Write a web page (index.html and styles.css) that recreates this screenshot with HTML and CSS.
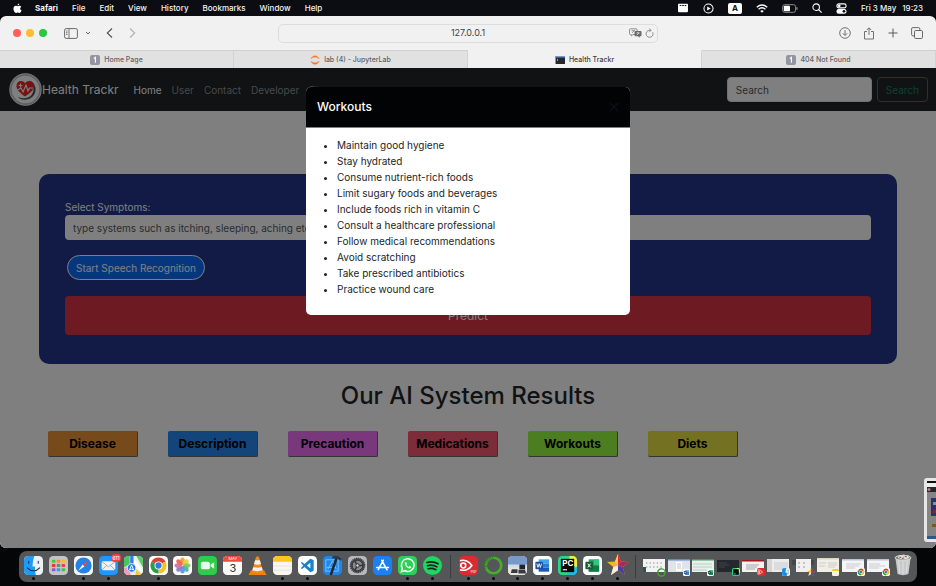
FILE: index.html
```html
<!DOCTYPE html>
<html lang="en">
<head>
<meta charset="utf-8">
<meta name="viewport" content="width=device-width, initial-scale=1">
<title>Health Trackr</title>
<link rel="stylesheet" href="styles.css">
</head>
<body>
<svg class="sprite" aria-hidden="true">
  <symbol id="finder" viewBox="0 0 20 20"><rect width="20" height="20" rx="4.5" fill="#eef1f5"/><path d="M4.5 0H11C9.500 4 9 7.500 9 11h2.500c0 3.500.3 6 1 9H4.500A4.500 4.500 0 0 1 0 15.500v-11A4.500 4.500 0 0 1 4.500 0z" fill="#1e9bf5"/><path d="M5 5.500v2.200M15 5.500v2.200M3.500 12.500c3.500 4 9.500 4 13 0" fill="none" stroke="#16324f" stroke-width="1.100" stroke-linecap="round"/></symbol>
  <symbol id="launchpad" viewBox="0 0 20 20"><rect width="20" height="20" rx="4.500" fill="#c3c4c8"/><g><rect x="3" y="4" width="3.800" height="3" rx=".8" fill="#4fc245"/><rect x="8.100" y="4" width="3.800" height="3" rx=".8" fill="#ff8a1f"/><rect x="13.200" y="4" width="3.800" height="3" rx=".8" fill="#ffb52b"/><rect x="3" y="8.500" width="3.800" height="3" rx=".8" fill="#e5383b"/><rect x="8.100" y="8.500" width="3.800" height="3" rx=".8" fill="#7c7e83"/><rect x="13.200" y="8.500" width="3.800" height="3" rx=".8" fill="#ed4141"/><rect x="3" y="13" width="3.800" height="3" rx=".8" fill="#9a4fd0"/><rect x="8.100" y="13" width="3.800" height="3" rx=".8" fill="#2f9df4"/><rect x="13.200" y="13" width="3.800" height="3" rx=".8" fill="#43c04a"/></g></symbol>
  <symbol id="safari" viewBox="0 0 20 20"><rect width="20" height="20" rx="4.500" fill="#f4f5f7"/><circle cx="10" cy="10" r="8.500" fill="#2482e6"/><path d="M15.500 4.500 11 11 9 9z" fill="#f3493d"/><path d="M4.500 15.500 9 9l2 2z" fill="#f5f5f5"/></symbol>
  <symbol id="mail" viewBox="0 0 20 20"><rect width="20" height="20" rx="4.500" fill="#2196f8"/><rect x="2.800" y="5.500" width="14.400" height="9.500" rx="1.500" fill="#eef2f5"/><path d="m3.200 6 6.800 5.300L16.800 6M3.200 14.600 8 10M16.800 14.600 12 10" fill="none" stroke="#8a9cad" stroke-width=".8"/></symbol>
  <symbol id="maps" viewBox="0 0 20 20"><rect width="20" height="20" rx="4.500" fill="#eceeec"/><path d="M0 4.500A4.500 4.500 0 0 1 4.500 0H6v9L0 12z" fill="#4cc35e"/><path d="M13 0h2.500A4.500 4.500 0 0 1 20 4.500V12z" fill="#5cca64"/><path d="M6.500 0H10v8H6.500z" fill="#2e7ff0"/><path d="M0 13l6-3 1 10H4.500A4.500 4.500 0 0 1 0 15.500z" fill="#ee9ebb"/><path d="M11 3l9 12-1 3-9-9z" fill="#fff"/><path d="M13 14l5 5-3 1h-3z" fill="#f4ca45"/><circle cx="8" cy="12.500" r="4.500" fill="#2679ee" stroke="#fff" stroke-width=".8"/><path d="m8 9.500 2.200 5.300L8 13.700l-2.200 1.100z" fill="none" stroke="#fff"/></symbol>
  <symbol id="chrome" viewBox="0 0 20 20"><rect width="20" height="20" rx="4.500" fill="#fff"/><path d="M10 10 2.640 5.750A8.500 8.500 0 0 1 17.360 5.750z" fill="#e33b2e"/><path d="M10 10l7.360-4.250A8.500 8.500 0 0 1 10 18.500z" fill="#fbc116"/><path d="M10 10v8.500A8.500 8.500 0 0 1 2.640 5.750z" fill="#2b9e49"/><circle cx="10" cy="10" r="4.200" fill="#fff"/><circle cx="10" cy="10" r="3.300" fill="#3179e9"/></symbol>
  <symbol id="photos" viewBox="0 0 20 20"><rect width="20" height="20" rx="4.500" fill="#fff"/><g opacity=".88"><ellipse cx="10" cy="5.500" rx="2.500" ry="3.900" fill="#fb9821"/><ellipse cx="10" cy="5.500" rx="2.500" ry="3.900" fill="#e8cf2c" transform="rotate(45 10 10)"/><ellipse cx="10" cy="5.500" rx="2.500" ry="3.900" fill="#85c44a" transform="rotate(90 10 10)"/><ellipse cx="10" cy="5.500" rx="2.500" ry="3.900" fill="#37b795" transform="rotate(135 10 10)"/><ellipse cx="10" cy="5.500" rx="2.500" ry="3.900" fill="#4a91dd" transform="rotate(180 10 10)"/><ellipse cx="10" cy="5.500" rx="2.500" ry="3.900" fill="#8570c2" transform="rotate(225 10 10)"/><ellipse cx="10" cy="5.500" rx="2.500" ry="3.900" fill="#cb69a9" transform="rotate(270 10 10)"/><ellipse cx="10" cy="5.500" rx="2.500" ry="3.900" fill="#f1583f" transform="rotate(315 10 10)"/></g></symbol>
  <symbol id="facetime" viewBox="0 0 20 20"><rect width="20" height="20" rx="4.500" fill="#2fcb4a"/><rect x="3" y="6" width="9.500" height="8" rx="2" fill="#e9fbed"/><path d="m13.300 9 3.700-2.500v7L13.300 11z" fill="#e9fbed"/></symbol>
  <symbol id="calendar" viewBox="0 0 20 20"><rect width="20" height="20" rx="4.500" fill="#fafafa"/><path d="M0 6V4.500A4.500 4.500 0 0 1 4.500 0h11A4.500 4.500 0 0 1 20 4.500V6z" fill="#ee4b43"/></symbol>
  <symbol id="vlc" viewBox="0 0 20 20"><path d="M3 15h14l2.500 5H.5z" fill="#f07f12"/><path d="M8.300 1.500Q10-.8 11.700 1.500L16 17.200q-6 2-12 0z" fill="#f6881b"/><path d="M7.500 4.500h5l1.200 4q-3.700 1.300-7.400 0zM5.500 11.500q4.500 1.500 9 0l1 3.600q-5.500 1.700-11 0z" fill="#f1f1ee"/></symbol>
  <symbol id="notes" viewBox="0 0 20 20"><rect width="20" height="20" rx="4.500" fill="#f8f6ee"/><path d="M0 6V4.500A4.500 4.500 0 0 1 4.500 0h11A4.500 4.500 0 0 1 20 4.500V6z" fill="#fbc71c"/><path d="M0 10.500h20M0 15h20" stroke="#dedbd0" stroke-width=".7"/></symbol>
  <symbol id="vscode" viewBox="0 0 20 20"><rect width="20" height="20" rx="4.500" fill="#fff"/><path d="m13 3 3.500 1.600v10.800L13 17 6.800 11.600 4.200 13.600 3 12.900l2.500-2.900L3 7.100l1.200-.7 2.600 2zM13 7l-3.700 3L13 13z" fill="#1683cf" fill-rule="evenodd"/></symbol>
  <symbol id="xcode" viewBox="0 0 20 20"><rect width="20" height="20" rx="4.500" fill="#1f86ea"/><path d="M3 4h13v12H3zM5 14l5-9 4 9M4 12h9" fill="none" stroke="#7fc0f8" stroke-width="1"/><path d="M14 3 8.500 19" stroke="#22252a" stroke-width="2.600" stroke-linecap="round"/><path d="M9.500.5 15-1l5 4-1 2-4-2-5-.5z" fill="#363a40"/></symbol>
  <symbol id="settings" viewBox="0 0 20 20"><rect width="20" height="20" rx="4.500" fill="#b5b8bc"/><circle cx="10" cy="10" r="7.600" fill="#46494d"/><circle cx="10" cy="10" r="5.600" fill="#85888c" stroke="#2c2e31" stroke-width="1"/><circle cx="10" cy="10" r="7.600" fill="none" stroke="#2c2e31" stroke-width="1.200" stroke-dasharray="1 1"/><path d="M10 10h5.500M10 10 7.200 5.200M10 10l-2.800 4.800" stroke="#303236" stroke-width="1.500"/><circle cx="10" cy="10" r="1.800" fill="#d2d3d5" stroke="#303236"/></symbol>
  <symbol id="appstore" viewBox="0 0 20 20"><rect width="20" height="20" rx="4.500" fill="#1b80f4"/><path d="M10.800 4.500 5.500 14.300M9.200 4.500 14.800 14.500M3.800 12.200h12.400" fill="none" stroke="#fff" stroke-width="1.600" stroke-linecap="round"/></symbol>
  <symbol id="whatsapp" viewBox="0 0 20 20"><rect width="20" height="20" rx="4.500" fill="#31cf59"/><path d="M3.500 16.500 4.500 13a6.700 6.700 0 1 1 2.600 2.500z" fill="none" stroke="#fff" stroke-width="1.500"/><path d="M7.500 6.500c-1.600 2 2.800 7.600 5.700 6.500 1-.5.700-1.500.6-1.700l-1.700-.8-.9 1c-1.300-.4-2-1.300-2.500-2.300l.7-.9-.7-1.800z" fill="#fff"/></symbol>
  <symbol id="spotify" viewBox="0 0 20 20"><circle cx="10" cy="10" r="10" fill="#1fd662"/><path d="M4.200 6.800q6-1.800 11.700 1.400M4.800 10.200q5.200-1.500 9.900 1.200M5.400 13.400q4.200-1.200 8.200 1" fill="none" stroke="#17221a" stroke-width="1.700" stroke-linecap="round"/></symbol>
  <symbol id="pdf" viewBox="0 0 20 20"><rect width="20" height="20" rx="4.500" fill="#dd2a2e"/><path d="M1 5c4.500-1.500 10 .8 12.500 5C11 14.200 5.500 16 1 14.500" fill="none" stroke="#fff" stroke-width="1.700"/><circle cx="4.500" cy="10" r="2.600" fill="none" stroke="#fff" stroke-width="1.700"/></symbol>
  <symbol id="ring" viewBox="0 0 20 20"><circle cx="10" cy="10" r="8.200" fill="none" stroke="#43b02a" stroke-width="2.800"/><path d="M2 13A8.200 8.200 0 0 1 10 1.800" fill="none" stroke="#246d1a" stroke-width="2.500" stroke-dasharray=".6 1"/></symbol>
  <symbol id="preview" viewBox="0 0 20 20"><rect width="20" height="20" rx="4.500" fill="#cfdcec"/><path d="M0 9V4.500A4.500 4.500 0 0 1 4.500 0h11A4.500 4.500 0 0 1 20 4.500V9z" fill="#7899cb"/><path d="M0 12h20v3.500a4.500 4.500 0 0 1-4.500 4.500h-11A4.500 4.500 0 0 1 0 15.500z" fill="#e8e4da"/><path d="M12 9h6v5h-6z" fill="#1d2530"/><path d="M4 14h6v4H3zM11 14.500h7l1 4h-8z" fill="#343b44"/></symbol>
  <symbol id="word" viewBox="0 0 20 20"><rect width="20" height="20" rx="4.500" fill="#fff"/><path d="M6 3.500h11v4.300H6z" fill="#41a5ee"/><path d="M6 7.800h11v4.400H6z" fill="#2b7cd3"/><path d="M6 12.200h11v4.300H6z" fill="#185abd"/><rect x="2.500" y="6" width="8" height="8" rx="1" fill="#1a4f9f"/><path d="m4 8 1.200 4 1.300-4 1.300 4L9 8" fill="none" stroke="#fff" stroke-width=".9"/></symbol>
  <symbol id="pycharm" viewBox="0 0 20 20"><rect width="20" height="20" rx="4.500" fill="#28d789"/><path d="M12 0h3.500A4.500 4.500 0 0 1 20 4.500V13L12 6z" fill="#e9ef4a"/><path d="M20 11v4.500a4.500 4.500 0 0 1-4.500 4.500H9z" fill="#22b9e8"/><rect x="3" y="3" width="14" height="14" fill="#080808"/><path d="M5 14.500h4.500" stroke="#fff" stroke-width="1.200"/></symbol>
  <symbol id="excel" viewBox="0 0 20 20"><rect width="20" height="20" rx="4.500" fill="#fff"/><path d="M6 3.500h11v13H6z" fill="#21a366"/><path d="M11.500 3.500H17V10h-5.500z" fill="#33c481"/><path d="M6 10h11v6.500H6z" fill="#107c41"/><rect x="2.500" y="6" width="8" height="8" rx="1" fill="#185c37"/><path d="m5 8 3 4M8 8l-3 4" stroke="#fff"/></symbol>
  <symbol id="star" viewBox="-1 -1 22 22"><path d="m10-1 3 7.500L21 7l-6.300 5L17 20l-7-4.700L3 20l2.300-8L-1 7l8-.5z" fill="#f6b62a"/><path d="m10-1 3 7.500L10 10.500z" fill="#d8243b"/><path d="M21 7l-6.300 5-4.700-1.500 3-4z" fill="#a62b5c"/><path d="M17 20l-7-4.700v-4.800l4.700 1.500z" fill="#513b9f"/><path d="M3 20l7-4.700v-4.800L5.300 12z" fill="#f4efe4"/><path d="M10-1v11.500l-3-4z" fill="#fbd34c"/></symbol>
  <symbol id="one" viewBox="0 0 10 10"><rect width="10" height="10" rx="2" fill="#9594a3"/><path d="M3.800 3.600 5.400 2.500V7.700" fill="none" stroke="#fff" stroke-width="1.200"/></symbol>
</svg>

<header class="menubar">
  <svg class="apple" viewBox="0 0 12 14" aria-hidden="true"><path d="M8.300.3c.1 1.300-1 2.700-2.300 2.700C5.800 1.700 7 .5 8.300.3zM6.200 3.900c.6 0 1.300-.7 2.400-.7 1 0 1.900.5 2.400 1.300-2.200 1.300-1.800 4.200.4 5.100-.5 1.400-1.600 3.300-2.900 3.300-.9 0-1.200-.6-2.300-.6s-1.400.6-2.300.6C2.200 12.900.6 10 .6 7.400.6 4.800 2.100 3.300 3.800 3.300c1 0 1.800.6 2.400.6z" fill="#fff"/></svg>
  <nav class="menus" aria-label="Menu bar">
    <span class="app-name">Safari</span><span>File</span><span>Edit</span><span>View</span><span>History</span><span>Bookmarks</span><span>Window</span><span>Help</span>
  </nav>
  <div class="status">
    <svg viewBox="0 0 14 12" width="12" height="10" aria-hidden="true"><rect x="1" y="1" width="12" height="10" rx="1" fill="#fff"/><path d="M3 3h2M6 3h2M9 3h2" stroke="#111" stroke-width="1.300"/></svg>
    <svg viewBox="0 0 14 14" width="11" height="11" aria-hidden="true"><circle cx="7" cy="7" r="5.800" fill="none" stroke="#fff" stroke-width="1.300"/><path d="m5.300 4.300 4.500 2.700-4.500 2.700z" fill="#fff"/></svg>
    <span class="input-source">A</span>
    <svg viewBox="0 0 16 12" width="12" height="9" aria-hidden="true"><path d="M1 4.300q7-6 14 0M3.400 7q4.600-4 9.200 0" fill="none" stroke="#fff" stroke-width="1.700"/><path d="m5.600 9.200 2.400 2.600 2.400-2.600q-2.400-1.700-4.800 0z" fill="#fff"/></svg>
    <svg viewBox="0 0 18 10" width="16" height="9" aria-hidden="true"><rect x=".7" y=".7" width="14.600" height="8.600" rx="2.300" fill="none" stroke="#9a9b9d"/><rect x="2" y="2" width="7" height="6" rx="1" fill="#fff"/><path d="M16.800 3.500v3" stroke="#9a9b9d" stroke-width="1.300"/></svg>
    <svg viewBox="0 0 12 12" width="10" height="10" aria-hidden="true"><circle cx="5" cy="5" r="3.900" fill="none" stroke="#fff" stroke-width="1.300"/><path d="m8 8 3.500 3.500" stroke="#fff" stroke-width="1.400"/></svg>
    <svg viewBox="0 0 12 12" width="11" height="11" aria-hidden="true"><rect x="1" y="1" width="10" height="4.300" rx="2.100" fill="none" stroke="#fff" stroke-width="1.200"/><circle cx="3.500" cy="3.100" r="1.500" fill="#fff"/><rect x=".5" y="6.500" width="11" height="5.200" rx="2.500" fill="#fff"/><circle cx="8.700" cy="9.100" r="1.500" fill="#111"/></svg>
    <time class="clock"><span>Fri 3 May</span><span>19:23</span></time>
  </div>
</header>

<main class="window">
  <div class="toolbar">
    <div class="tools">
      <i class="light close"></i><i class="light minimise"></i><i class="light expand"></i>
      <button class="tool sidebar-tool" aria-label="Sidebar"><svg viewBox="0 0 14 11" width="14" height="11"><rect x=".6" y=".6" width="12.800" height="9.800" rx="1.600" fill="none" stroke="#69696b"/><path d="M5 .6v9.800M2 3h1.500M2 4.700h1.500M2 6.400h1.500" stroke="#69696b" stroke-width=".9"/></svg></button>
      <button class="tool group-tool" aria-label="Tab groups"><svg viewBox="0 0 6 4" width="6" height="4"><path d="m1 1 2 2 2-2" fill="none" stroke="#606062"/></svg></button>
      <button class="tool back-tool" aria-label="Back"><svg viewBox="0 0 7 12" width="7" height="12"><path d="M6 1.500 1.300 6 6 10.500" fill="none" stroke="#515153" stroke-width="1.100"/></svg></button>
      <button class="tool forward-tool" aria-label="Forward"><svg viewBox="0 0 7 12" width="7" height="12"><path d="M1 1.500 5.700 6 1 10.500" fill="none" stroke="#b0b0b1" stroke-width="1.100"/></svg></button>
    </div>
    <div class="address">
      <input type="text" value="127.0.0.1" aria-label="Address">
      <span class="address-icons">
        <svg viewBox="0 0 13 10" width="13" height="10" aria-hidden="true"><path d="M1.500.8h5.600q1 0 1 1v3.700q0 1-1 1H4L2.300 8V6.500h-.8q-1 0-1-1V1.800q0-1 1-1z" fill="none" stroke="#777779" stroke-width=".8"/><path d="M2.500 2.700h3.500M4.200 2v.7M3 5l2.300-2.300" stroke="#777779" stroke-width=".7"/><path d="M6.500 3h5q1 0 1 1v3.300q0 1-1 1h-.8v1.500L9 8.300H6.500q-1 0-1-1V4q0-1 1-1z" fill="#69696b"/><path d="M7.500 5h3.200M9 4v1M7.800 7 10 5" stroke="#eee" stroke-width=".7"/></svg>
        <svg viewBox="0 0 9 10" width="9" height="10" aria-hidden="true"><path d="M7.700 4.200A3.500 3.500 0 1 1 4.500 2.300h1.300M4.300.5l1.800 1.800-1.800 1.800" fill="none" stroke="#757577" stroke-width=".8"/></svg>
      </span>
    </div>
    <div class="tools tools-right">
      <button class="tool" aria-label="Downloads"><svg viewBox="0 0 12 12" width="12" height="12"><circle cx="6" cy="6" r="5.300" fill="none" stroke="#626264" stroke-width=".9"/><path d="M6 3v5.300M3.800 6.300 6 8.500l2.200-2.200" fill="none" stroke="#626264" stroke-width=".9"/></svg></button>
      <button class="tool" aria-label="Share"><svg viewBox="0 0 12 13" width="12" height="13"><path d="M4 4.500H1.500V12h9V4.500H8M6 8V1M3.800 3 6 .8 8.200 3" fill="none" stroke="#626264" stroke-width=".9"/></svg></button>
      <button class="tool" aria-label="New tab"><svg viewBox="0 0 12 12" width="12" height="12"><path d="M6 1.500v9M1.500 6h9" stroke="#59595b"/></svg></button>
      <button class="tool" aria-label="Tab overview"><svg viewBox="0 0 12 12" width="12" height="12"><rect x="3.500" y="3.500" width="8" height="8" rx="1.200" fill="none" stroke="#59595b" stroke-width=".9"/><path d="M3.500 8.800H1.800q-1.200 0-1.200-1.200V1.800Q.6.600 1.800.6h5.800q1.200 0 1.200 1.200v1.700" fill="none" stroke="#59595b" stroke-width=".9"/></svg></button>
    </div>
  </div>

  <div class="tabs">
    <button class="tab"><svg width="10" height="10" aria-hidden="true"><use href="#one"/></svg>Home Page</button>
    <button class="tab"><svg viewBox="0 0 10 10" width="10" height="10" aria-hidden="true"><path d="M.7 3.400Q5-2 9.300 3.400 5 .8.700 3.400zM.7 6.600Q5 12 9.300 6.600 5 9.200.7 6.600z" fill="#f37726" stroke="#f37726" stroke-width=".5"/></svg>lab (4) - JupyterLab</button>
    <button class="tab current"><svg viewBox="0 0 10 10" width="10" height="10" aria-hidden="true"><rect y="1" width="10" height="8" fill="#24282d"/><path d="M0 1h10v1.500H0zM0 1h1v8H0z" fill="#6c9bd0"/><path d="m2 4 1 .8-1 .8" fill="none" stroke="#fff" stroke-width=".6"/></svg>Health Trackr</button>
    <button class="tab"><svg width="10" height="10" aria-hidden="true"><use href="#one"/></svg>404 Not Found</button>
  </div>

  <div class="page">
    <nav class="navbar">
      <a class="brand" href="#">
        <svg class="logo" viewBox="0 0 33 33" aria-hidden="true"><circle cx="16.500" cy="16.500" r="16.200" fill="#fff"/><circle cx="16.500" cy="16.500" r="14.600" fill="none" stroke="#bfc4c4" stroke-width="1.800"/><path d="M20.500 7.500c8 3 8.500 15-.5 18.500-5 1.700-9 .5-11-2 5 2 10 1.500 13-1.500 4-4.500 3-11.500-1.500-15z" fill="#4f5558"/><path d="M16 23.500C10 19 7.500 16.500 7.500 13c0-5.500 6-6.500 8.500-2.800C18.500 6.500 25 7.500 25 13c0 3.500-3 6.500-9 10.500z" fill="#ed2424"/><path d="m8.500 17 3.500-2 2 4 3-7 2 6 1.500-3H24" fill="none" stroke="#fff" stroke-width="1.100"/><path d="M11.500 10.500v4M9.500 12.500h4" stroke="#fff" stroke-width="1.200"/></svg>
        <span>Health Trackr</span>
      </a>
      <div class="links"><a class="active" href="#">Home</a><a href="#">User</a><a href="#">Contact</a><a href="#">Developer</a><a href="#">Blog</a></div>
      <form class="search"><input type="search" placeholder="Search" aria-label="Search"><button type="button">Search</button></form>
    </nav>

    <form class="panel">
      <label for="symptoms">Select Symptoms:</label>
      <input id="symptoms" type="text" placeholder="type systems such as itching, sleeping, aching etc">
      <button class="speech" type="button">Start Speech Recognition</button>
      <button class="predict" type="button">Predict</button>
    </form>

    <h1>Our AI System Results</h1>
    <div class="results">
      <button class="disease">Disease</button>
      <button class="description">Description</button>
      <button class="precaution">Precaution</button>
      <button class="medications">Medications</button>
      <button class="workouts">Workouts</button>
      <button class="diets">Diets</button>
    </div>

    <div class="backdrop">
      <section class="modal" role="dialog" aria-labelledby="modal-title">
        <header class="modal-head">
          <h2 id="modal-title">Workouts</h2>
          <button aria-label="Close"><svg viewBox="0 0 10 10" width="10" height="10"><path d="m1 1 8 8M9 1 1 9" stroke="#0c1113" stroke-width="1.300"/></svg></button>
        </header>
        <ul>
          <li>Maintain good hygiene</li>
          <li>Stay hydrated</li>
          <li>Consume nutrient-rich foods</li>
          <li>Limit sugary foods and beverages</li>
          <li>Include foods rich in vitamin C</li>
          <li>Consult a healthcare professional</li>
          <li>Follow medical recommendations</li>
          <li>Avoid scratching</li>
          <li>Take prescribed antibiotics</li>
          <li>Practice wound care</li>
        </ul>
      </section>
    </div>
  </div>
</main>

<footer class="dock">
  <span class="app running"><svg><use href="#finder"/></svg></span>
  <span class="app"><svg><use href="#launchpad"/></svg></span>
  <span class="app running"><svg><use href="#safari"/></svg></span>
  <span class="app running"><svg><use href="#mail"/></svg><b class="count">611</b></span>
  <span class="app"><svg><use href="#maps"/></svg></span>
  <span class="app running"><svg><use href="#chrome"/></svg></span>
  <span class="app"><svg><use href="#photos"/></svg></span>
  <span class="app"><svg><use href="#facetime"/></svg></span>
  <span class="app"><svg><use href="#calendar"/></svg><span class="date"><small>MAY</small>3</span></span>
  <span class="app"><svg><use href="#vlc"/></svg></span>
  <span class="app running"><svg><use href="#notes"/></svg></span>
  <span class="app running"><svg><use href="#vscode"/></svg></span>
  <span class="app"><svg><use href="#xcode"/></svg></span>
  <span class="app"><svg><use href="#settings"/></svg></span>
  <span class="app"><svg><use href="#appstore"/></svg></span>
  <span class="app running"><svg><use href="#whatsapp"/></svg></span>
  <span class="app running"><svg><use href="#spotify"/></svg></span>
  <i class="divider"></i>
  <span class="app running"><svg><use href="#pdf"/></svg><small class="pdf-name">PDF</small></span>
  <span class="app running"><svg><use href="#ring"/></svg></span>
  <span class="app running"><svg><use href="#preview"/></svg></span>
  <span class="app running"><svg><use href="#word"/></svg></span>
  <span class="app running"><svg><use href="#pycharm"/></svg><b class="pc-name">PC</b></span>
  <span class="app running"><svg><use href="#excel"/></svg></span>
  <span class="app running"><svg class="star"><use href="#star"/></svg></span>
  <i class="divider"></i>
  <span class="app"><svg viewBox="0 0 24 20" class="mini"><path d="M1 3h22v13H1z" fill="#f2f3f2"/><path d="M4 7h17M4 11h16" stroke="#888" stroke-width="1" stroke-dasharray="1.300 2.300"/><path d="M1 11h3v5H1z" fill="#245c45"/><use href="#ring" x="15" y="12" width="9" height="9"/></svg></span>
  <span class="app"><svg viewBox="0 0 24 20" class="mini"><path d="M1 3h22v13H1z" fill="#dfe4ec"/><path d="M1 3h22v1.500H1z" fill="#5b8bd0"/><path d="M9 6h6v9H9z" fill="#fff"/><path d="M10 8h4M10 10h4M10 12h4" stroke="#999" stroke-width=".6"/><use href="#word" x="16" y="13" width="7" height="7"/></svg></span>
  <span class="app"><svg viewBox="0 0 24 20" class="mini"><path d="M1 3h22v13H1z" fill="#e9f1ec"/><path d="M1 3h22v1.500H1z" fill="#3d9b69"/><path d="M2 8h19M2 11h19M2 14h14" stroke="#a5ceb6" stroke-width=".8"/><use href="#excel" x="16" y="13" width="7" height="7"/></svg></span>
  <span class="app"><svg viewBox="0 0 24 20" class="mini"><path d="M1 4h22v12H1z" fill="#25292e"/><path d="M3 7h8M3 9h10M3 11h6" stroke="#47505a" stroke-width=".7"/><use href="#pycharm" x="16" y="12" width="8" height="8"/></svg></span>
  <span class="app"><svg viewBox="0 0 24 20" class="mini"><path d="M1 4h22v12H1z" fill="#f2f2f2"/><path d="M1 4h22v1.500H1z" fill="#a3171b"/><path d="M5 9h13M5 11h11M5 13h9" stroke="#888" stroke-width=".7"/><use href="#pdf" x="16" y="12" width="8" height="8"/></svg></span>
  <span class="app"><svg viewBox="0 0 24 20" class="mini"><path d="M1 3h22v13H1z" fill="#ececec"/><path d="M1 3h5v13H1z" fill="#d5d5d5"/><path d="M8 7h14M8 9h14M8 11h14M8 13h8" stroke="#bbb" stroke-width=".6"/><use href="#finder" x="16" y="12" width="8" height="8"/></svg></span>
  <span class="app"><svg viewBox="0 0 24 20" class="mini"><path d="M1 4h22v5H1z" fill="#45484b"/><path d="M5 3h15v13H5z" fill="#f0f0f0"/><path d="M7 7h10M7 11h10" stroke="#999" stroke-width="1" stroke-dasharray="2 3"/><use href="#star" x="16" y="12" width="8" height="8"/></svg></span>
  <span class="app"><svg viewBox="0 0 24 20" class="mini"><path d="M1 2h22v14H1z" fill="#f0eee7"/><path d="M1 2h22v1.500H1z" fill="#ddd6bb"/><path d="M3 7h7M12 7h9M12 9h9M12 11h7M3 10h6" stroke="#c2beb3" stroke-width=".7"/><use href="#notes" x="16" y="13" width="7" height="7"/></svg></span>
  <span class="app"><svg viewBox="0 0 24 20" class="mini"><path d="M1 3h22v13H1z" fill="#f5f5f7"/><path d="M1 3h22v1.500H1z" fill="#b7c3df"/><path d="M5 8h15M5 10h13M5 12h9" stroke="#b9bbc0" stroke-width=".7"/><use href="#chrome" x="16" y="12" width="8" height="8"/></svg></span>
  <span class="app"><svg viewBox="0 0 24 20" class="mini"><path d="M1 3h22v13H1z" fill="#f5f5f7"/><path d="M1 3h22v1.500H1z" fill="#b7c3df"/><path d="M3 8h11M3 10h16M3 12h10" stroke="#b9bbc0" stroke-width=".7"/><use href="#chrome" x="16" y="12" width="8" height="8"/></svg></span>
  <span class="app"><svg viewBox="0 0 20 24" class="trash"><path d="M1.500 4 4 22q6 2.500 12 0l2.500-18z" fill="#c8caca"/><path d="M5 7l1.500 14M10 7v15M15 7l-1.500 14" stroke="#dcdddd" stroke-width="1.300"/><ellipse cx="10" cy="4" rx="8.800" ry="2.700" fill="#777c7d" stroke="#e3e4e4"/><path d="m4 4 2-3 3 1 2-2 2 2 3-.5 1 3-4 1.500-5-.5z" fill="#d9dada"/><path d="m6 3 2 1M12 2l2 1M9 5l2-1" stroke="#9c5c48" stroke-width="1.200"/></svg></span>
</footer>

<svg class="capture" viewBox="0 0 12 64" preserveAspectRatio="none" aria-hidden="true"><rect width="20" height="64" rx="3" fill="#e6e6e6"/><path d="M3 3h9v58H3z" fill="#858585"/><path d="M3 3h9v2H3z" fill="#111"/><path d="M3 5h9v4H3z" fill="#eee"/><path d="M3 9h9v5H3z" fill="#24272a"/><circle cx="5" cy="11.500" r="1.500" fill="#b78282"/><path d="M7 20h5v18H7z" fill="#26346d"/><path d="M9 24h3v3H9z" fill="#8b8fa2"/><path d="M9 32h3v3H9z" fill="#8a2331"/><path d="M8 46h4v3H8z" fill="#7d552a"/><path d="M3 58h9v3H3z" fill="#2d5a83"/></svg>
</body>
</html>
```
FILE: styles.css
```css
* { box-sizing: border-box; }

body {
  position: relative;
  display: flex;
  flex-direction: column;
  min-height: 100vh;
  margin: 0;
  background: #050607;
  color: #212529;
  font: 10px/16px Inter, "Liberation Sans", sans-serif;
}

button, input { margin: 0; padding: 0; border: 0; font: inherit; }
button { background: none; }
svg { display: block; flex: none; }
.sprite { position: absolute; width: 0; height: 0; }

/* Menu bar */
.menubar {
  display: flex;
  align-items: center;
  height: 16px;
  padding: 0 13px;
  background: #0b0d12;
  color: #f3f3f4;
  font-size: 8px;
  font-weight: 500;
  white-space: nowrap;
}
.apple { width: 9px; height: 11px; margin-right: 13px; }
.menus { display: flex; gap: 14px; }
.app-name { font-weight: 700; }
.status { display: flex; align-items: center; gap: 14px; margin-left: auto; }
.input-source {
  padding: 0 4px;
  border-radius: 2px;
  background: #fff;
  color: #111;
  font-weight: 700;
  line-height: 11px;
}
.clock { display: flex; gap: 6px; }

/* Browser window */
.window {
  display: flex;
  flex: 1;
  flex-direction: column;
  overflow: hidden;
  border-radius: 6px;
  background: #f2f1f2;
}
.toolbar {
  display: grid;
  grid-template-columns: 1fr 380px 1fr;
  align-items: center;
  height: 34px;
}
.tools { display: flex; align-items: center; padding: 0 13px; }
.tools-right { justify-content: flex-end; gap: 12px; }
.light { width: 8px; height: 8px; margin-right: 5px; border-radius: 50%; }
.close { background: #ff5f57; }
.minimise { background: #febc2e; }
.expand { background: #28c840; }
.tool { display: flex; }
.sidebar-tool { margin-left: 12px; }
.group-tool { margin-left: 7px; }
.back-tool { margin-left: 15px; }
.forward-tool { margin-left: 16px; }
.address {
  display: grid;
  grid-template-columns: 28px 1fr 28px;
  align-items: center;
  height: 19px;
  border: 1px solid #dddddf;
  border-radius: 5px;
}
.address input {
  grid-column: 2;
  min-width: 0;
  background: none;
  color: #414143;
  font-size: 9px;
  text-align: center;
}
.address-icons { display: flex; gap: 3px; align-items: center; justify-content: flex-end; padding-right: 3px; }
.tabs {
  display: grid;
  grid-template-columns: repeat(4, 1fr);
  height: 18px;
  border-bottom: 1px solid #c9c9ca;
}
.tab {
  display: flex;
  align-items: center;
  justify-content: center;
  gap: 4px;
  padding-top: 1px;
  border-top: 1px solid #d0d0d1;
  border-right: 1px solid #d3d2d4;
  background: #e2e1e2;
  color: #626264;
  font-size: 7px;
  font-weight: 500;
}
.tab.current { border-top-color: #f2f1f2; background: #f2f1f2; color: #3d3d3f; }

/* Site */
.page { position: relative; flex: 1; background: #fff; }
.navbar {
  display: flex;
  align-items: center;
  height: 43px;
  padding: 0 8px 0 9px;
  background: #212529;
}
.navbar a { color: #909294; text-decoration: none; }
.navbar .active { color: #fff; }
.navbar .brand { display: flex; align-items: center; color: #fff; font-size: 12px; }
.logo { width: 33px; height: 33px; }
.links { display: flex; gap: 10px; margin-left: 15px; }
.search { display: flex; gap: 5px; margin-left: auto; }
.search input {
  width: 145px;
  height: 25px;
  padding: 0 8px;
  border: 1px solid #dee2e6;
  border-radius: 4px;
  background: #fff;
}
.search button {
  height: 25px;
  padding: 0 8px;
  border: 1px solid #198754;
  border-radius: 4px;
  color: #198754;
}
::placeholder { color: #54585c; opacity: 1; }

.panel {
  display: flex;
  flex-direction: column;
  align-items: flex-start;
  margin: 63px 39px 0;
  padding: 25px 26px 29px;
  border-radius: 10px;
  background: #22368c;
  color: #fff;
}
.panel input {
  width: 100%;
  height: 25px;
  padding: 0 8px;
  border-radius: 4px;
  background: #fff;
}
.speech {
  height: 25px;
  margin: 15px 2px 0;
  padding: 0 8px;
  border: 1px solid #fff;
  border-radius: 13px;
  background: #0d6efd;
  color: #fff;
}
.predict {
  width: 100%;
  height: 39px;
  margin-top: 16px;
  border-radius: 4px;
  background: #dc3545;
  color: #fff;
  font-size: 12px;
}
h1 { margin: 16px 0 0; font-size: 24px; font-weight: 500; line-height: 32px; text-align: center; }
.results {
  display: flex;
  flex-wrap: wrap;
  gap: 30px;
  margin: 19px 48px 24px;
}
.results button {
  width: 90px;
  height: 26px;
  border: 0 solid #666;
  border-width: 0 1px 1px 0;
  border-radius: 2px;
  color: #000;
  font-size: 12px;
  font-weight: 700;
}
.disease { background: #ee9438; }
.description { background: #268af5; }
.precaution { background: #f371f9; }
.medications { background: #fa5975; }
.workouts { background: #98fa42; }
.diets { background: #e8e444; }

/* Modal */
.backdrop {
  position: absolute;
  inset: 0;
  display: flex;
  align-items: flex-start;
  justify-content: center;
  padding-top: 19px;
  background: rgba(0, 0, 0, .5);
}
.modal {
  width: 324px;
  overflow: hidden;
  border-radius: 5px;
  background: #fff;
}
.modal-head {
  display: flex;
  align-items: center;
  justify-content: space-between;
  height: 41px;
  padding: 0 11px;
  border-bottom: 1px solid #808080;
  background: #010304;
  color: #fff;
}
.modal h2 { margin: 0; font-size: 12px; font-weight: 500; }
.modal ul { margin: 0; padding: 9px 11px 18px 31px; }

/* Dock */
.dock {
  display: flex;
  margin: 3px 19px 4px;
  padding: 0 2px;
  height: 31px;
  border-radius: 8px;
  background: #555657;
}
.app {
  position: relative;
  display: flex;
  flex: 1;
  flex-direction: column;
  align-items: center;
  padding-top: 5px;
}
.app svg { width: 19px; height: 19px; overflow: visible; }
.app .mini { width: 24px; height: 20px; }
.app .star { width: 22px; height: 22px; margin: -2px 0 -1px; }
.app .trash { width: 18px; height: 22px; margin-top: -2px; }
.running::after {
  width: 3px;
  height: 3px;
  margin-top: 2px;
  border-radius: 50%;
  background: #0b0b0b;
  content: "";
}
.divider { width: 1px; margin: 4px 5px; background: #3b3c3d; }
.count {
  position: absolute;
  top: 3px;
  right: 0;
  padding: 0 1px;
  border-radius: 4px;
  background: #f8423c;
  color: #fff;
  font-size: 5px;
  font-weight: 500;
  line-height: 8px;
}
.date {
  position: absolute;
  inset: 5px 0 auto;
  color: #333;
  font-size: 11px;
  line-height: 12px;
  text-align: center;
}
.date small { display: block; color: #fff; font-size: 4px; line-height: 6px; }
.pdf-name { position: absolute; right: 4px; bottom: 8px; color: #fff; font-size: 3px; line-height: 4px; }
.pc-name { position: absolute; top: 8px; color: #fff; font-size: 8px; line-height: 8px; }

/* Screen capture preview at the screen edge */
.capture { position: absolute; right: 0; bottom: 44px; width: 12px; height: 64px; }
```
